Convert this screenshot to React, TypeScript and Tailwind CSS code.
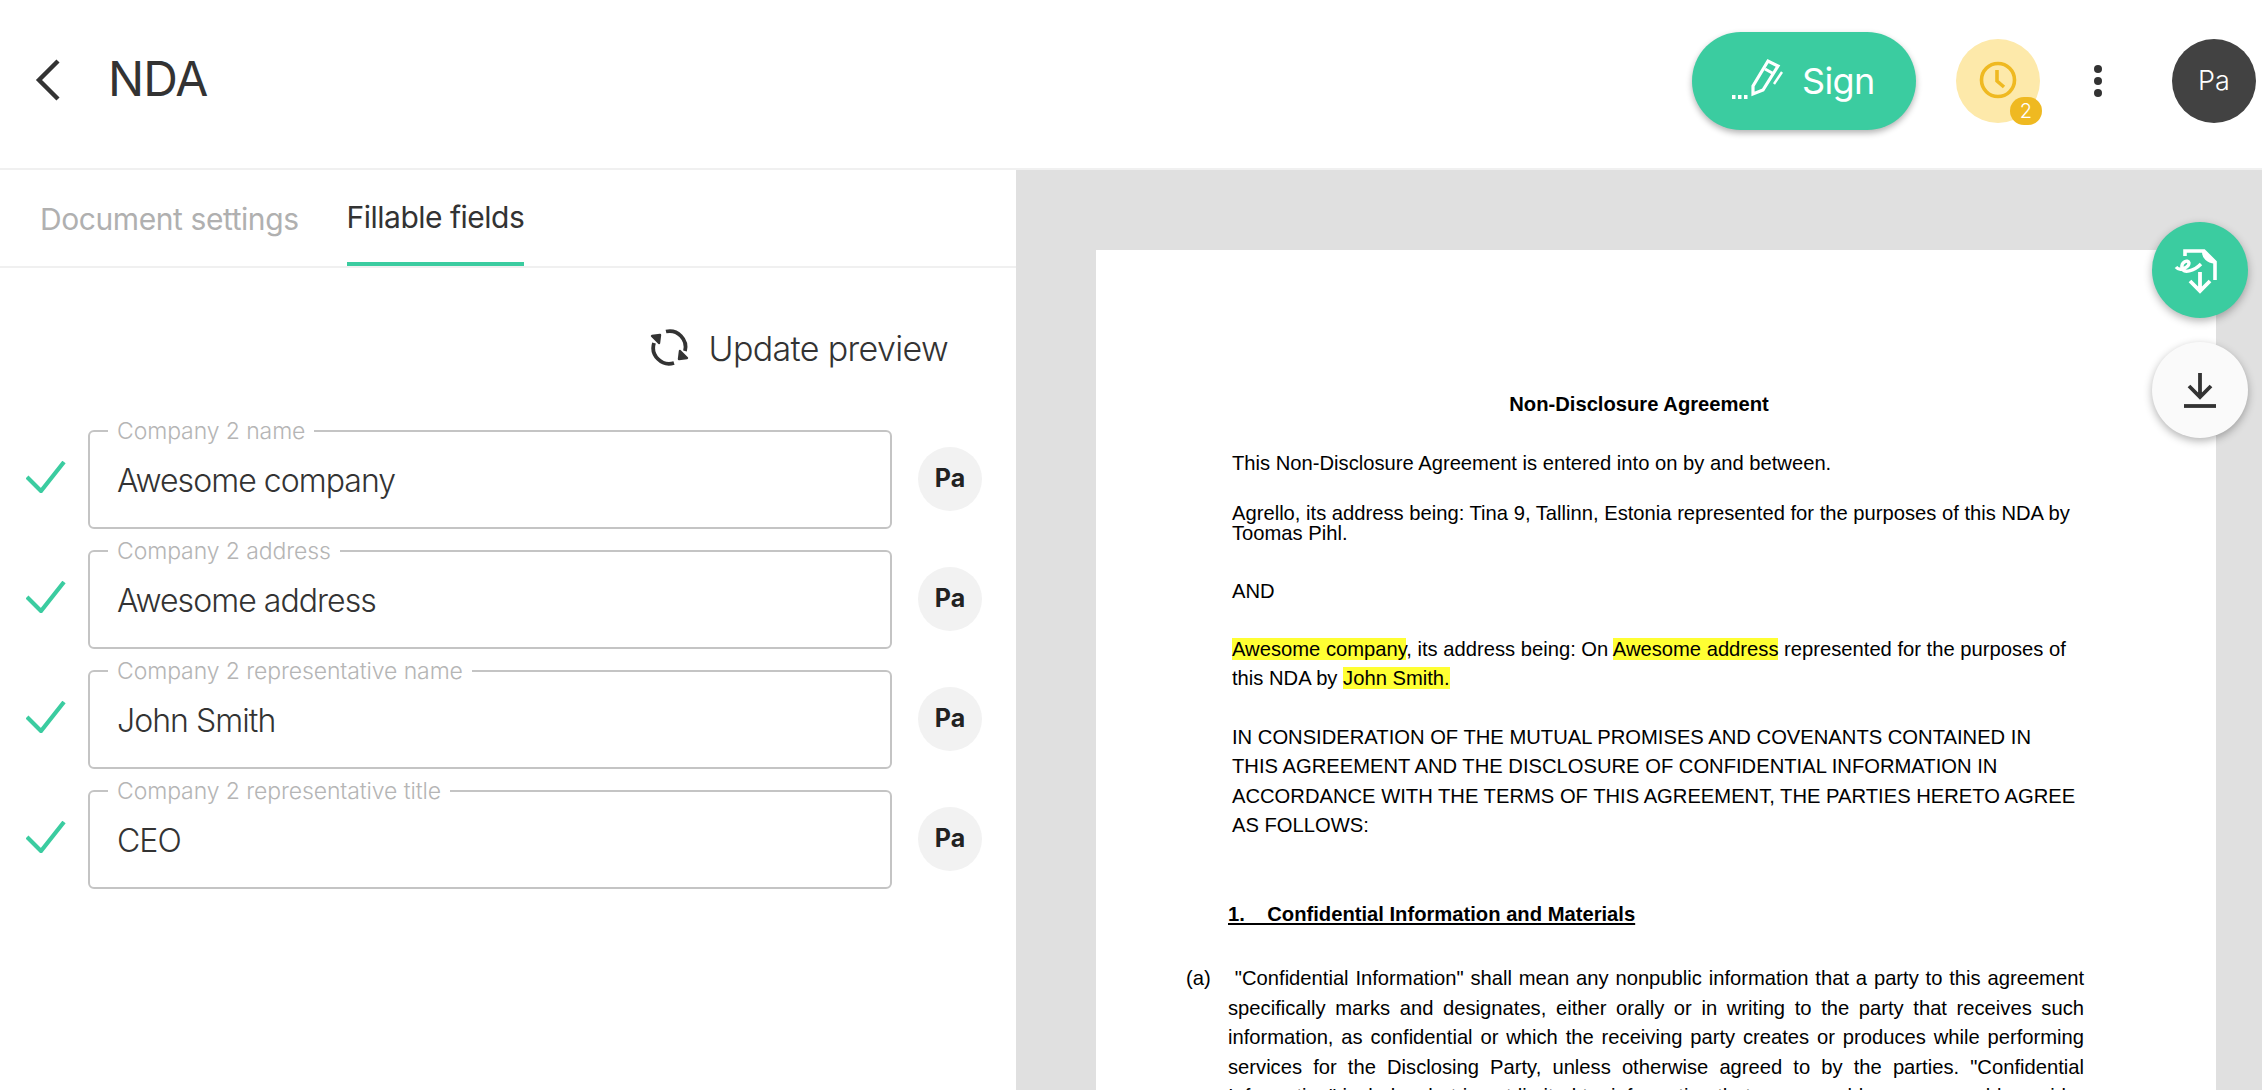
import React from "react";

const ui = "font-['Inter',sans-serif]";

function Field({ label, value }: { label: string; value: string }) {
  return (
    <div className="flex items-center h-[120px]">
      <div className="w-[88px] pl-[26px] shrink-0 -mt-[4px]">
        <svg width="40" height="32" viewBox="0 0 40 32" fill="none" stroke="#3bcca0" strokeWidth="4.2">
          <path d="M1 16 L15 30 L38 1" />
        </svg>
      </div>
      <div className="relative w-[804px] h-[99px] shrink-0 border-2 border-[#c4c4c4] rounded-[6px] bg-white flex items-center pl-[27px] pt-[3px] text-[32px] tracking-[-0.95px] text-[#333333] font-light">
        <span className="absolute left-[18px] -top-[15px] bg-white px-[9px] text-[23px] leading-[28px] tracking-[-0.1px] text-[#b5b5b5] font-light whitespace-nowrap">{label}</span>
        {value}
      </div>
      <div className="ml-[26px] w-[64px] h-[64px] rounded-full bg-[#f2f2f2] flex items-center justify-center text-[25px] font-bold text-[#222222]">Pa</div>
    </div>
  );
}

function Doc() {
  return (
    <div className="bg-white w-[1120px] h-[1000px] mt-[80px] ml-[80px] pt-[140px] pl-[136px] pr-[132px] text-black text-[20.2px] font-['Liberation_Sans',sans-serif]">
      <p className="text-center font-bold leading-[28px] pr-[38px]">Non-Disclosure Agreement</p>
      <p className="mt-[31px] leading-[28px]">This Non-Disclosure Agreement is entered into on by and between.</p>
      <p className="mt-[26px] leading-[20px]">Agrello, its address being: Tina 9, Tallinn, Estonia represented for the purposes of this NDA by Toomas Pihl.</p>
      <p className="mt-[34px] leading-[28px]">AND</p>
      <p className="mt-[30px] leading-[29.4px] pr-[4px]">
        <span className="bg-[#ffff33]">Awesome company</span>, its address being: On <span className="bg-[#ffff33]">Awesome address</span> represented for the purposes of this NDA by <span className="bg-[#ffff33]">John Smith.</span>
      </p>
      <p className="mt-[29px] leading-[29.4px] pr-[4px]">IN CONSIDERATION OF THE MUTUAL PROMISES AND COVENANTS CONTAINED IN THIS AGREEMENT AND THE DISCLOSURE OF CONFIDENTIAL INFORMATION IN ACCORDANCE WITH THE TERMS OF THIS AGREEMENT, THE PARTIES HERETO AGREE AS FOLLOWS:</p>
      <p className="mt-[60px] -ml-[4px] leading-[29px] font-bold underline whitespace-pre">1.    Confidential Information and Materials</p>
      <div className="relative mt-[35px] -ml-[4px] leading-[29.4px] text-justify">
        <span className="absolute -left-[42px] top-0">(a)</span>
        <span className="whitespace-pre"> </span>"Confidential Information" shall mean any nonpublic information that a party to this agreement specifically marks and designates, either orally or in writing to the party that receives such information, as confidential or which the receiving party creates or produces while performing services for the Disclosing Party, unless otherwise agreed to by the parties. "Confidential Information" includes, but is not limited to, information that a reasonable person would consider to be confidential and proprietary in nature.
      </div>
    </div>
  );
}

export default function App() {
  return (
    <div className={`relative w-[2262px] h-[1090px] overflow-hidden bg-white flex flex-col ${ui}`}>
      <header className="h-[170px] shrink-0 border-b-2 border-[#f0f0f0] flex items-center relative pb-[6px]">
        <svg className="ml-[35px] -mt-[2px]" width="26" height="42" viewBox="0 0 26 42" fill="none" stroke="#333333" strokeWidth="4.4">
          <path d="M23 2 L4 21 L23 40" />
        </svg>
        <h1 className="ml-[47px] -mt-[4px] text-[48px] tracking-[-0.9px] font-normal text-[#333333]">NDA</h1>
        <div className="ml-auto flex items-center pr-[6px]">
          <button className="w-[224px] h-[98px] rounded-[49px] bg-[#3bcca0] shadow-[0_3px_6px_rgba(0,0,0,0.3)] flex items-center pl-[28px] text-white text-[36px] tracking-[-0.6px] font-normal">
            <svg width="70" height="60" viewBox="0 0 70 60" fill="none" stroke="white" strokeWidth="3.2">
              <path d="M12 46h3.5M18 46h3.5M24 46h3.5" strokeWidth="4" />
              <path d="M33 35 L48 10 L58 15 L43 39 L33 43 Z" />
              <path d="M45 18 L54 23" strokeWidth="3" />
              <path d="M62 21 L54 33" strokeWidth="2.4" />
            </svg>
            <span className="ml-[12px]">Sign</span>
          </button>
          <div className="relative ml-[40px] w-[84px] h-[84px] rounded-full bg-[#fde9aa] flex items-center justify-center">
            <svg width="38" height="38" viewBox="0 0 38 38" fill="none" stroke="#efb921" strokeWidth="3.6" className="-mt-[3px]">
              <circle cx="19" cy="19" r="16.5" />
              <path d="M18 9v11l7 6" />
            </svg>
            <span className="absolute left-[54px] top-[58px] w-[32px] h-[28px] rounded-full bg-[#efb921] flex items-center justify-center text-white text-[20px] font-light">2</span>
          </div>
          <div className="ml-[51px] w-[14px] flex flex-col gap-[4px] items-center">
            <span className="w-[8px] h-[8px] rounded-full bg-[#333333]" />
            <span className="w-[8px] h-[8px] rounded-full bg-[#333333]" />
            <span className="w-[8px] h-[8px] rounded-full bg-[#333333]" />
          </div>
          <div className="ml-[67px] w-[84px] h-[84px] rounded-full bg-[#424242] flex items-center justify-center text-white text-[27px] font-light">Pa</div>
        </div>
      </header>
      <div className="flex flex-1 min-h-0">
        <aside className="w-[1016px] shrink-0 bg-white">
          <div className="h-[98px] border-b-2 border-[#f0f0f0] flex pl-[40px] text-[30px] tracking-[-0.42px]">
            <div className="h-[96px] flex items-center text-[#b0b0b0] font-normal pt-[2px]">Document settings</div>
            <div className="ml-[48px] h-[96px] flex items-center border-b-4 border-[#3bcca0] text-[#333333] pt-[2px] tracking-[-0.5px]">Fillable fields</div>
          </div>
          <div className="flex items-center justify-end pr-[68px] mt-[55px] h-[50px] text-[#333333]">
            <svg width="40" height="42" viewBox="10 9 40 42" fill="none" stroke="#333333" strokeWidth="3.8" strokeLinejoin="round">
              <path d="M26 13.5 A16 16 0 0 1 45 33" />
              <path d="M34 45 A16 16 0 0 1 14 25" />
              <path d="M12 18 L20 17 L19 25 Z" fill="#333333" strokeWidth="2.4" />
              <path d="M47 40 L39 41 L40 33 Z" fill="#333333" strokeWidth="2.4" />
            </svg>
            <span className="ml-[19px] text-[34px] tracking-[-0.65px] font-light">Update preview</span>
          </div>
          <div className="mt-[46px]">
            <Field label="Company 2 name" value="Awesome company" />
            <Field label="Company 2 address" value="Awesome address" />
            <Field label="Company 2 representative name" value="John Smith" />
            <Field label="Company 2 representative title" value="CEO" />
          </div>
        </aside>
        <main className="flex-1 bg-[#e0e0e0] min-w-0 overflow-hidden">
          <Doc />
        </main>
      </div>
      <button className="absolute left-[2152px] top-[222px] w-[96px] h-[96px] rounded-full bg-[#3bcca0] shadow-[0_3px_8px_rgba(0,0,0,0.3)] flex items-center justify-center">
        <svg width="60" height="60" viewBox="0 0 60 60" fill="none" stroke="white" strokeWidth="3.6">
          <path d="M15 16 V11 H34 L45 22 V40" />
          <path d="M34 11 C33 17 38 21 45 22" fill="white" />
          <path d="M6 27 C10 32 19 27 19 23 C18 19 11 22 12 28 C13 34 24 31 31 24" strokeWidth="3.4" />
          <path d="M30 32 V50 M20 41 L30 51 L40 41" strokeWidth="3.8" />
        </svg>
      </button>
      <button className="absolute left-[2152px] top-[342px] w-[96px] h-[96px] rounded-full bg-[#fafafa] shadow-[0_3px_8px_rgba(0,0,0,0.3)] flex items-center justify-center">
        <svg width="32" height="36" viewBox="0 0 32 36" fill="none" stroke="#333333" strokeWidth="3.8">
          <path d="M16 1 V24 M5 14 L16 25 L27 14" />
          <path d="M0 34 H32" />
        </svg>
      </button>
    </div>
  );
}
